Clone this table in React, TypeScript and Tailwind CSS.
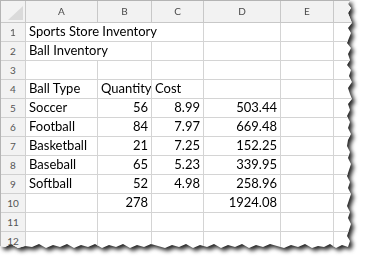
const cols = ["A", "B", "C", "D", "E", ""];

type Cell = { text?: string; right?: boolean; span?: number };

const rows: Cell[][] = [
  [{ text: "Sports Store Inventory", span: 3 }, {}, {}, {}],
  [{ text: "Ball Inventory", span: 2 }, {}, {}, {}, {}],
  [{}, {}, {}, {}, {}, {}],
  [{ text: "Ball Type" }, { text: "Quantity" }, { text: "Cost" }, {}, {}, {}],
  [{ text: "Soccer" }, { text: "56", right: true }, { text: "8.99", right: true }, { text: "503.44", right: true }, {}, {}],
  [{ text: "Football" }, { text: "84", right: true }, { text: "7.97", right: true }, { text: "669.48", right: true }, {}, {}],
  [{ text: "Basketball" }, { text: "21", right: true }, { text: "7.25", right: true }, { text: "152.25", right: true }, {}, {}],
  [{ text: "Baseball" }, { text: "65", right: true }, { text: "5.23", right: true }, { text: "339.95", right: true }, {}, {}],
  [{ text: "Softball" }, { text: "52", right: true }, { text: "4.98", right: true }, { text: "258.96", right: true }, {}, {}],
  [{}, { text: "278", right: true }, {}, { text: "1924.08", right: true }, {}, {}],
  [{}, {}, {}, {}, {}, {}],
  [{}, {}, {}, {}, {}, {}],
];

function Row({ n, cells }: { n: number; cells: Cell[] }) {
  return (
    <>
      <div className="h-[19px] bg-[#f2f2f2] border-r border-b border-[#d0d0d0] flex items-center justify-center text-[10px] text-[#555555]">
        {n}
      </div>
      {cells.map((c, i) => (
        <div
          key={i}
          className={`h-[19px] border-r border-b border-[#d4d4d4] flex items-center px-[3px] whitespace-nowrap overflow-hidden text-[13px] text-black ${
            c.right ? "justify-end" : "justify-start"
          } ${c.span === 3 ? "col-span-3" : c.span === 2 ? "col-span-2" : ""}`}
        >
          {c.text}
        </div>
      ))}
    </>
  );
}

export default function App() {
  return (
    <div className="w-[366px] h-[262px] bg-white overflow-hidden font-['Lato',sans-serif]">
      {/* torn sheet with shadow */}
      <div className="[filter:drop-shadow(3px_3px_2px_rgba(0,0,0,0.85))]">
        <div className="w-[354px] h-[251px] bg-white border-t border-l border-[#b4b4b4] overflow-hidden [clip-path:polygon(0px_0px,350px_0px,348px_4px,351px_8px,348px_13px,350px_18px,352px_23px,348px_28px,351px_33px,349px_38px,347px_43px,351px_48px,348px_54px,350px_60px,347px_65px,351px_70px,349px_76px,352px_82px,348px_88px,350px_94px,352px_99px,348px_104px,350px_110px,347px_116px,350px_122px,348px_128px,351px_134px,348px_140px,347px_146px,350px_152px,348px_158px,351px_164px,349px_170px,347px_176px,350px_182px,348px_188px,351px_194px,349px_200px,347px_206px,350px_212px,348px_218px,351px_224px,349px_230px,347px_236px,350px_241px,348px_247px,342px_245px,336px_248px,330px_244px,324px_247px,318px_246px,312px_248px,305px_244px,298px_247px,291px_245px,284px_248px,277px_246px,270px_244px,263px_247px,256px_245px,249px_248px,242px_244px,235px_247px,228px_245px,221px_248px,214px_244px,207px_247px,200px_245px,193px_248px,186px_244px,179px_247px,172px_245px,165px_248px,158px_246px,151px_244px,144px_247px,137px_245px,130px_248px,123px_244px,116px_247px,109px_245px,102px_248px,95px_244px,88px_247px,81px_245px,74px_248px,67px_244px,60px_247px,53px_245px,46px_248px,39px_244px,32px_247px,25px_246px,18px_248px,11px_244px,5px_247px,0px_246px)]">
          <div className="grid grid-cols-[25px_72px_54px_52px_77px_53px_1fr]">
            <div className="h-[22px] bg-[#f2f2f2] border-r border-b border-[#c8c8c8] flex items-end justify-end pr-[2px] pb-[2px]">
              <svg width="15" height="14" viewBox="0 0 15 14">
                <polygon points="15,0 15,14 0,14" fill="#dadada" />
              </svg>
            </div>
            {cols.map((c, i) => (
              <div
                key={i}
                className="h-[22px] bg-[#f2f2f2] border-r border-b border-[#c8c8c8] flex items-center justify-center text-[10px] text-[#4a4a4a]"
              >
                {c}
              </div>
            ))}
            {rows.map((r, i) => (
              <Row key={i} n={i + 1} cells={r} />
            ))}
          </div>
        </div>
      </div>
    </div>
  );
}
